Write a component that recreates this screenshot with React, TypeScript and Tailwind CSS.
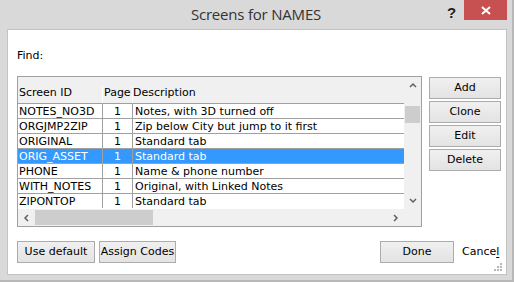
import React from "react";

interface Row {
  id: string;
  page: string;
  desc: string;
  selected?: boolean;
}

const rows: Row[] = [
  { id: "NOTES_NO3D", page: "1", desc: "Notes, with 3D turned off" },
  { id: "ORGJMP2ZIP", page: "1", desc: "Zip below City but jump to it first" },
  { id: "ORIGINAL", page: "1", desc: "Standard tab" },
  { id: "ORIG_ASSET", page: "1", desc: "Standard tab", selected: true },
  { id: "PHONE", page: "1", desc: "Name & phone number" },
  { id: "WITH_NOTES", page: "1", desc: "Original, with Linked Notes" },
  { id: "ZIPONTOP", page: "1", desc: "Standard tab" },
];

function Arrow({ dir }: { dir: "up" | "down" | "left" | "right" }) {
  const pts = {
    up: "1,5 4,2 7,5",
    down: "1,2 4,5 7,2",
    left: "5,1 2,4 5,7",
    right: "2,1 5,4 2,7",
  }[dir];
  return (
    <svg width="8" height="8" viewBox="0 0 8 8">
      <polyline points={pts} fill="none" stroke="#606060" strokeWidth="1.5" />
    </svg>
  );
}

function Button({ label, w }: { label: string; w: string }) {
  return (
    <div
      className={`${w} h-[22px] flex items-center justify-center border border-[#acacac] bg-gradient-to-b from-[#f0f0f0] to-[#e3e3e3] text-black`}
    >
      {label}
    </div>
  );
}

function ListView() {
  return (
    <div className="w-[405px] h-[151px] border border-[#a0a0a0] flex bg-white">
      <div className="w-[386px] flex flex-col">
        <div className="h-[132px] overflow-hidden">
          <div className="flex h-[26px] bg-[#f0f0f0] leading-[13px] pt-[9px]">
            <div className="w-[85px] pl-[1px] border-r border-white">Screen ID</div>
            <div className="w-[30px] pl-[1px] border-r border-white">Page</div>
            <div className="flex-1">Description</div>
          </div>
          {rows.map((r) => (
            <div
              key={r.id}
              className={`flex h-[15px] border-t border-[#a0a0a0] leading-[13px] whitespace-nowrap ${
                r.selected ? "bg-[#3399ff] text-white" : "text-black"
              }`}
            >
              <div className="w-[85px] pl-[1px] pt-[1px] border-r border-[#a0a0a0]">{r.id}</div>
              <div className="w-[30px] pt-[1px] text-center border-r border-[#a0a0a0]">{r.page}</div>
              <div className="flex-1 pl-[2px] pt-[1px] overflow-hidden">{r.desc}</div>
            </div>
          ))}
        </div>
        <div className="h-[17px] bg-[#f0f0f0] flex items-center">
          <div className="w-[17px] h-[17px] flex items-center justify-center">
            <Arrow dir="left" />
          </div>
          <div className="w-[118px] h-[15px] bg-[#cdcdcd]" />
          <div className="flex-1" />
          <div className="w-[17px] h-[17px] flex items-center justify-center">
            <Arrow dir="right" />
          </div>
        </div>
      </div>
      <div className="w-[17px] flex flex-col bg-[#f0f0f0]">
        <div className="h-[17px] flex items-center justify-center">
          <Arrow dir="up" />
        </div>
        <div className="mt-[12px] ml-[1px] w-[15px] h-[17px] bg-[#cdcdcd]" />
        <div className="flex-1" />
        <div className="h-[17px] flex items-center justify-center">
          <Arrow dir="down" />
        </div>
        <div className="h-[17px]" />
      </div>
    </div>
  );
}

export default function App() {
  return (
    <div
      className="w-[514px] h-[282px] bg-[#d9d9d9] flex flex-col border-r-2 border-b-2 border-[#b8b8b8] text-[11px] text-black"
      style={{ fontFamily: '"DejaVu Sans", Tahoma, sans-serif' }}
    >
      <div className="relative h-[29px] flex items-center justify-center">
        <span
          className="text-[15px] text-[#333333] tracking-[-0.2px]"
          style={{ fontFamily: '"Open Sans", "Noto Sans", sans-serif' }}
        >
          Screens for NAMES
        </span>
        <span
          className="absolute left-[447px] top-[2px] text-[15px] font-bold text-[#222222]"
          style={{ fontFamily: '"Liberation Sans", sans-serif' }}
        >
          ?
        </span>
        <div className="absolute left-[464px] top-0 w-[43px] h-[20px] bg-[#c75050] flex items-center justify-center">
          <svg width="10" height="9" viewBox="0 0 10 9">
            <path d="M1 1 L9 8 M9 1 L1 8" stroke="#ffffff" strokeWidth="2" />
          </svg>
        </div>
      </div>

      <div className="relative ml-[7px] w-[500px] h-[246px] bg-white border border-[#c3c3c3] pl-[9px] pt-[19px]">
        <div className="h-[14px] leading-[14px]">Find:</div>
        <div className="mt-[13px] flex">
          <ListView />
          <div className="ml-[7px] mt-[1px] flex flex-col gap-[2px]">
            <Button label="Add" w="w-[72px]" />
            <Button label="Clone" w="w-[72px]" />
            <Button label="Edit" w="w-[72px]" />
            <Button label="Delete" w="w-[72px]" />
          </div>
        </div>
        <div className="mt-[14px] flex items-center">
          <Button label="Use default" w="w-[78px]" />
          <div className="ml-[4px]">
            <Button label="Assign Codes" w="w-[77px]" />
          </div>
          <div className="ml-[204px]">
            <Button label="Done" w="w-[74px]" />
          </div>
          <span className="ml-[8px]">
            Cance<span className="underline underline-offset-2">l</span>
          </span>
        </div>
        <svg className="absolute right-[4px] bottom-[3px]" width="8" height="8" viewBox="0 0 8 8">
          <rect x="6" y="0" width="2" height="2" fill="#b8b8b8" />
          <rect x="3" y="3" width="2" height="2" fill="#b8b8b8" />
          <rect x="6" y="3" width="2" height="2" fill="#b8b8b8" />
          <rect x="0" y="6" width="2" height="2" fill="#b8b8b8" />
          <rect x="3" y="6" width="2" height="2" fill="#b8b8b8" />
          <rect x="6" y="6" width="2" height="2" fill="#b8b8b8" />
        </svg>
      </div>
    </div>
  );
}
